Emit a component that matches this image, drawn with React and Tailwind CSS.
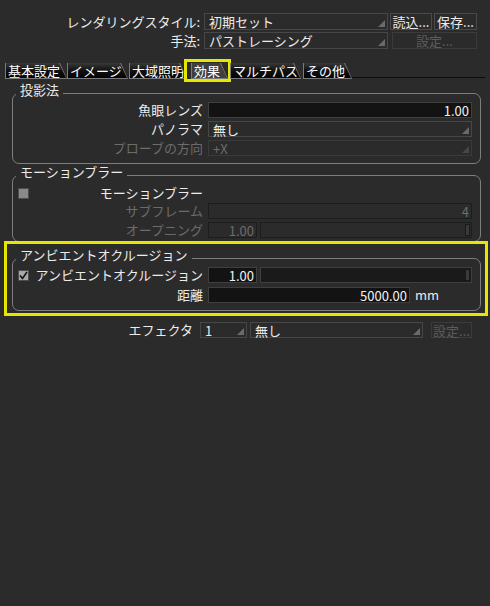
import React from "react";

/* shared text colours */
const ON = "text-[#ececec]";
const OFF = "text-[#6c6c6c]";

const Arrow = ({ dim }) => (
  <svg className="mb-[2px] mr-[2px] shrink-0 self-end" width="7" height="7">
    <polygon points="7,0 7,7 0,7" fill={dim ? "#474747" : "#6a6a6a"} />
  </svg>
);

const Dropdown = ({ children, disabled, className = "" }) => (
  <div
    className={`flex h-full items-stretch justify-between border bg-[#2b2b2b] pl-[4px] ${
      disabled ? "border-[#3a3a3a] text-[#6c6c6c]" : "border-[#474747] text-[#ececec]"
    } ${className}`}
  >
    <span className="leading-[15px] whitespace-nowrap">{children}</span>
    <Arrow dim={disabled} />
  </div>
);

const Button = ({ children, disabled, className = "" }) => (
  <div
    className={`flex h-full items-center justify-center border bg-[#2b2b2b] leading-[15px] ${
      disabled ? "border-[#3b3b3b] text-[#5c5c5c]" : "border-[#4a4a4a] text-[#ececec]"
    } ${className}`}
  >
    {children}
  </div>
);

const Field = ({ value, disabled, className = "" }) => (
  <div
    className={`flex h-full items-center justify-end border pr-[2px] leading-[15px] ${
      disabled
        ? "border-[#1d1d1d] bg-[#2b2b2b] text-[#6c6c6c]"
        : "border-[#3f3f3f] bg-[#131313] text-[#f2f2f2]"
    } ${className}`}
  >
    {value}
  </div>
);

const Slider = ({ disabled, className = "" }) => (
  <div
    className={`flex h-full justify-end border p-px ${
      disabled ? "border-[#1d1d1d] bg-[#2b2b2b]" : "border-[#3f3f3f] bg-[#1a1a1a]"
    } ${className}`}
  >
    <div className="w-[5px] border border-[#1a1a1a] bg-[#3a3a3a]" />
  </div>
);

const Check = ({ checked }) => (
  <div
    className={`flex h-[11px] w-[11px] shrink-0 items-center justify-center border border-[#4d4d4d] ${
      checked ? "bg-[#a8a8a8]" : "bg-[#8a8a8a]"
    }`}
  >
    {checked && (
      <svg width="9" height="9" viewBox="0 0 9 9">
        <polyline points="1,4.5 3.5,7.5 8,1" fill="none" stroke="#111" strokeWidth="1.6" />
      </svg>
    )}
  </div>
);

/* one labelled row inside a group: label column ends at x=203, control starts at 208 */
const Row = ({ label, dim, check, children, className = "" }) => (
  <div className={`flex h-[16px] items-center ${className}`}>
    <div className="flex w-[190px] items-center">
      {check !== undefined && (
        <div className="ml-[5px]">
          <Check checked={check} />
        </div>
      )}
      <div className={`flex-1 text-right leading-[16px] whitespace-nowrap ${dim ? OFF : ON}`}>{label}</div>
    </div>
    <div className="ml-[5px] flex h-full w-[264px] items-stretch">{children}</div>
  </div>
);

/* legend is 22px tall with the text on top, so the frame line sits just under the title's middle */
const Group = ({ title, children, className = "" }) => (
  <fieldset className={`rounded-[7px] border border-[#7e7e7e] ${className}`}>
    <legend className={`ml-[3px] px-[4px] pb-[6px] leading-[16px] ${ON}`}>{title}</legend>
    {children}
  </fieldset>
);

const TABS = [
  { label: "基本設定", cls: "w-[62px]" },
  { label: "イメージ", cls: "w-[61px]" },
  { label: "大域照明", cls: "ml-px w-[58px]" },
  { label: "効果", cls: "ml-[4px] w-[37px]", active: true },
  { label: "マルチパス", cls: "ml-[2px] w-[71px]" },
  { label: "その他", cls: "ml-[2px] w-[49px]" },
];

const Tab = ({ label, cls, active }) => (
  <div className={`relative h-[16px] ${cls}`}>
    <div className="h-full bg-[#7a7a7a] [clip-path:polygon(0_0,calc(100%-7px)_0,100%_100%,0_100%)]">
      <div
        className={`ml-px mt-px flex h-[15px] w-[calc(100%-2px)] items-center pl-[2px] leading-[15px] whitespace-nowrap text-white [clip-path:polygon(0_0,calc(100%-7px)_0,100%_100%,0_100%)] ${
          active ? "bg-[#3f3f3f]" : "bg-gradient-to-b from-[#3a3a3a] via-[#121212] to-[#040404]"
        }`}
      >
        {label}
      </div>
    </div>
    {active && (
      <div className="absolute -top-[3px] -bottom-[4px] -left-[7px] -right-[3px] border-[3px] border-[#e6e600]" />
    )}
  </div>
);

export default function App() {
  return (
    <div className="h-[606px] w-[490px] overflow-hidden bg-[#2b2b2b] pt-[13px] font-['Noto_Sans_CJK_JP',sans-serif] text-[13px]">
      {/* style / method */}
      <div className="flex h-[17px] items-stretch">
        <div className={`w-[200px] text-right leading-[17px] ${ON}`}>レンダリングスタイル:</div>
        <Dropdown className="ml-[4px] w-[184px]">初期セット</Dropdown>
        <Button className="ml-[2px] w-[42px]">読込...</Button>
        <Button className="ml-[2px] w-[43px]">保存...</Button>
      </div>
      <div className="mt-[2px] flex h-[17px] items-stretch">
        <div className={`w-[200px] text-right leading-[17px] ${ON}`}>手法:</div>
        <Dropdown className="ml-[4px] w-[184px]">パストレーシング</Dropdown>
        <Button disabled className="ml-[4px] w-[85px]">設定...</Button>
      </div>

      {/* tabs */}
      <div className="mt-[13px] flex items-end pl-[5px]">
        {TABS.map((t) => (
          <Tab key={t.label} {...t} />
        ))}
        <div className="mr-[5px] h-px flex-1 bg-[#0c0c0c]" />
      </div>

      {/* projection */}
      <Group title="投影法" className="ml-[12px] mr-[9px] mt-[4px] pb-[7px]">
        <div className="-mt-[2px] flex flex-col gap-[3px]">
          <Row label="魚眼レンズ">
            <Field value="1.00" className="flex-1" />
          </Row>
          <Row label="パノラマ">
            <Dropdown className="flex-1">無し</Dropdown>
          </Row>
          <Row label="プローブの方向" dim>
            <Dropdown disabled className="flex-1">+X</Dropdown>
          </Row>
        </div>
      </Group>

      {/* motion blur */}
      <Group title="モーションブラー" className="ml-[12px] mr-[9px] pb-[3px]">
        <Row label="モーションブラー" check={false} className="-mt-px" />
        <Row label="サブフレーム" dim className="mt-[2px]">
          <Field value="4" disabled className="flex-1" />
        </Row>
        <Row label="オープニング" dim className="mt-[3px]">
          <Field value="1.00" disabled className="w-[49px]" />
          <Slider disabled className="ml-[3px] flex-1" />
        </Row>
      </Group>

      {/* ambient occlusion, highlighted */}
      <div className="relative z-10 -mt-px ml-[4px] mr-[2px] border-[3px] border-[#e6e600] pb-[2px] pl-[5px] pr-[4px] pt-[3px]">
        <Group title="アンビエントオクルージョン" className="pb-[7px]">
          <Row label="アンビエントオクルージョン" check className="-mt-[2px]">
            <Field value="1.00" className="w-[49px]" />
            <Slider className="ml-[3px] flex-1" />
          </Row>
          <Row label="距離" className="mt-[4px]">
            <Field value="5000.00" className="w-[202px]" />
            <span className={`ml-[5px] leading-[16px] ${ON}`}>mm</span>
          </Row>
        </Group>
      </div>

      {/* effector */}
      <div className="mt-[6px] flex h-[16px] items-stretch">
        <div className={`w-[193px] text-right leading-[16px] ${ON}`}>エフェクタ</div>
        <Dropdown className="ml-[7px] w-[47px]">1</Dropdown>
        <Dropdown className="ml-[3px] w-[173px]">無し</Dropdown>
        <Button disabled className="ml-[8px] w-[41px]">設定...</Button>
      </div>
    </div>
  );
}
